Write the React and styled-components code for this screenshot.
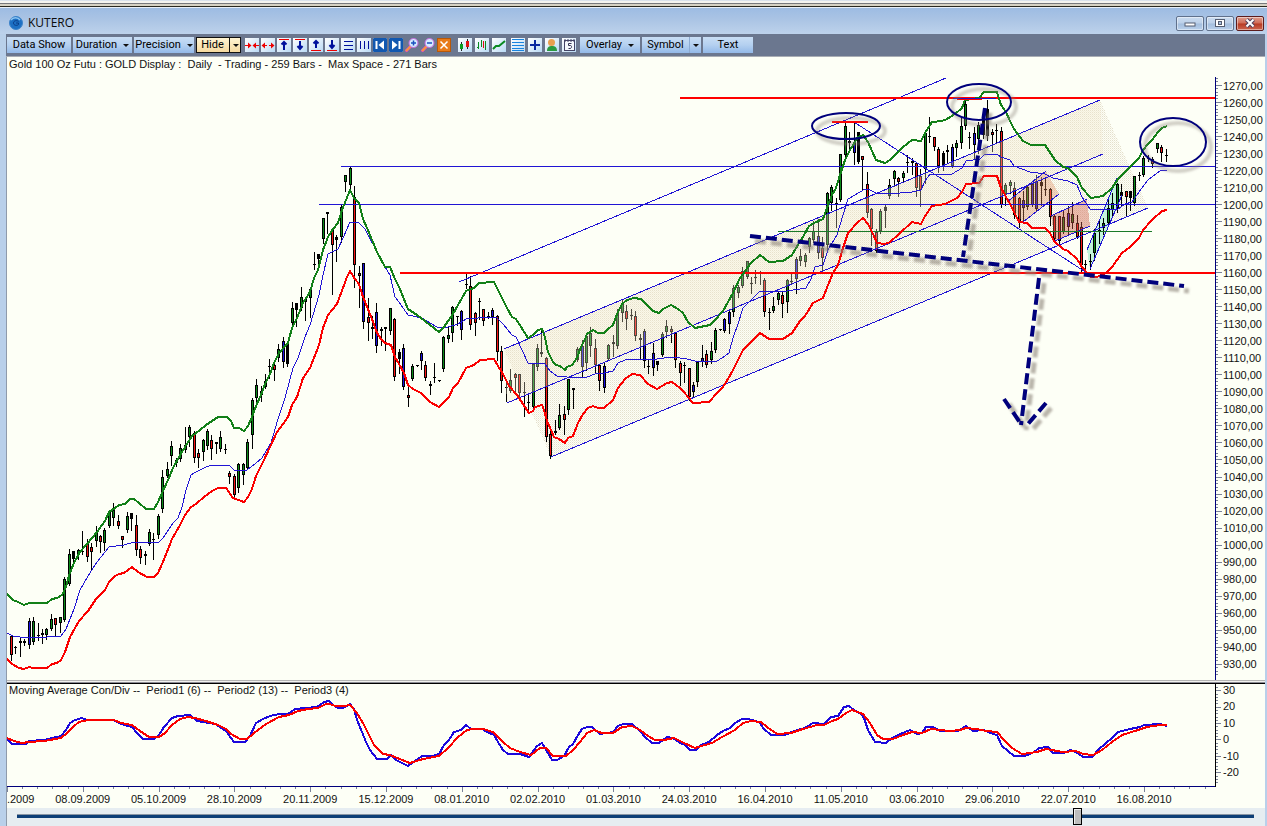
import React, { useState } from 'react';
import styled, { createGlobalStyle, css } from 'styled-components';

const GlobalStyle = createGlobalStyle`
  * {
    box-sizing: border-box;
  }
  body {
    margin: 0;
    background: #bad0ea;
    color: #111;
    font-family: 'Liberation Sans', Arial, sans-serif;
    font-size: 11px;
    line-height: 12px;
  }
`;

const Screen = styled.div`
  display: flex;
  flex-direction: column;
  min-height: 100vh;
`;

const DesktopEdge = styled.div`
  flex: none;
  height: 8px;
  background: linear-gradient(#d9e2ec 0 1px, #f4f4f0 1px 3px, #77797d 3px 4px, #d6d2c4 4px 6px, #28281f 6px 7px, #e6eef7 7px 8px);
`;

const Window = styled.section`
  flex: 1;
  display: flex;
  flex-direction: column;
  padding: 0 2px 0 6px;
  background: #b9d0ea;
`;

const TitleBar = styled.header`
  flex: none;
  display: flex;
  align-items: center;
  height: 26px;
  margin: 0 -2px 0 -6px;
  padding: 4px 3px 0 9px;
  background: linear-gradient(#9dbce3, #a9c3e4 40%, #bdd2eb);
`;

const Title = styled.h1`
  flex: 1;
  margin: 0 0 0 5px;
  font: 12px/16px 'Open Sans', 'Noto Sans', sans-serif;
  color: #0c0c0c;
`;

const WindowButtons = styled.div`
  display: flex;
  gap: 2px;
`;

const WindowButton = styled.button`
  display: flex;
  align-items: center;
  justify-content: center;
  width: 28px;
  height: 15px;
  padding: 0;
  border: 1px solid ${props => props.$danger ? '#5c1c1c' : '#60718c'};
  border-radius: 2px;
  background: ${props => props.$danger
    ? 'linear-gradient(#e0a090, #cf6a55 48%, #b83a22 52%, #cc6650)'
    : 'linear-gradient(#cbdcf0, #bcd0e9 48%, #a3bddd 52%, #bad1ec)'};
  box-shadow: inset 0 0 0 1px rgba(255, 255, 255, 0.45);
`;

const Toolbar = styled.div`
  flex: none;
  display: flex;
  align-items: center;
  height: 23px;
  padding: 0 1px;
  background: #6b778f;
  border-bottom: 1px solid #a9adb4;
`;

const toolFace = css`
  height: 16px;
  border: 0;
  background: linear-gradient(#c9def5, #b4d0f0 50%, #93b9e8);
  color: #000;
  font: 11px/16px Roboto, 'Open Sans', sans-serif;
  white-space: nowrap;
`;

const ToolButton = styled.button`
  ${toolFace}
  display: flex;
  align-items: center;
  justify-content: center;
  gap: 6px;
  flex: none;
  width: ${props => props.$width}px;
  margin-right: 2px;
  padding: 0;
`;

const SplitButton = styled.div`
  ${toolFace}
  display: flex;
  flex: none;
  width: ${props => props.$width}px;
  margin-right: 2px;
  ${props => props.$active && css`
    background: linear-gradient(#fff6d6, #f5d89c);
    outline: 1px solid #111;
    outline-offset: -1px;
    margin-right: 4px;
  `}

  button {
    display: flex;
    align-items: center;
    justify-content: center;
    height: 16px;
    padding: 0;
    border: 0;
    background: none;
    color: inherit;
    font: inherit;
  }
  button:first-child {
    flex: 1;
  }
  button:last-child {
    width: 12px;
    border-left: 1px solid ${props => props.$active ? '#111' : '#8dabd2'};
  }
`;

const Caret = styled.span`
  border: 3px solid transparent;
  border-top-color: #111;
  border-bottom: 0;
`;

const IconGroup = styled.div`
  display: flex;
  flex: none;
  gap: ${props => props.$gap}px;
  margin-right: ${props => props.$after}px;
`;

const IconButton = styled.button`
  width: 14px;
  height: 14px;
  padding: 0;
  border: 0;
  background: ${props => props.$bare ? 'none' : 'linear-gradient(135deg, #fff, #b9d9f4)'};

  svg {
    display: block;
  }
`;

const ChartArea = styled.main`
  flex: 1;
  display: flex;
  flex-direction: column;
  border-left: 1px solid #8f9bab;
  background: #fdfff6;
`;

const Pane = styled.div`
  display: grid;
  grid-template-columns: 1fr 42px;
  grid-template-rows: 100%;
  min-height: 0;
  flex: ${props => props.$fixed ? `0 0 ${props.$fixed}px` : '1 1 0'};
`;

const Plot = styled.svg`
  grid-area: 1 / 1;
  display: block;
  width: 100%;
  height: 100%;
`;

const Caption = styled.h2`
  grid-area: 1 / 1;
  align-self: start;
  margin: 0;
  padding: ${props => props.$offset}px 2px 0;
  font-size: 11px;
  font-weight: normal;
  line-height: 12px;
  white-space: pre;
`;

const PriceLabels = styled.ol`
  grid-area: 1 / 2;
  display: grid;
  grid-auto-rows: 1fr;
  align-items: center;
  margin: 0;
  padding: 20px 0 7px;
  list-style: none;
`;

const IndicatorLabels = styled.ol`
  grid-area: 1 / 2;
  display: flex;
  flex-direction: column;
  justify-content: space-between;
  margin: 0;
  padding: 0 0 9px;
  list-style: none;
`;

const Splitter = styled.div`
  flex: none;
  height: 4px;
  background: linear-gradient(#b4b4b4 0 1px, #f2f2ee 1px 2px, #8c8c94 2px 3px, #000 3px 4px);
`;

const DateAxis = styled.div`
  flex: none;
  overflow: hidden;

  svg {
    display: block;
    width: 100%;
    height: 6px;
  }
`;

const DateLabels = styled.ol`
  display: grid;
  grid-template-columns: repeat(16, 1fr);
  margin: 0 83px 0 -38px;
  padding: 0 0 3px;
  list-style: none;
  text-align: center;
`;

const ScrollRow = styled.label`
  flex: none;
  display: block;
  height: 18px;
  padding: 0 11px 0 10px;
  background: #e6edf1;
`;

const Scroll = styled.input`
  appearance: none;
  display: block;
  width: 100%;
  height: 17px;
  margin: 0;
  background: linear-gradient(transparent 6px, #8a96a4 6px 7px, #0d3f77 7px 10px, transparent 10px);

  &::-webkit-slider-thumb {
    appearance: none;
    width: 9px;
    height: 17px;
    border: 1px solid #000;
    background: #bdbdbd;
    box-shadow: inset 1px 1px 0 #eee;
  }
`;

// high, body top, body bottom, low, colour
const candles = `
635 636 655 660 r|646 647 648 653 k|637 641 643 656 b|639 641 643 645 g|618 621 645 648 b|617 621 642 644 g
623 635 636 640 k|629 633 635 643 r|628 629 635 639 g|614 619 629 630 g|618 618 625 636 r|617 617 623 632 g
577 579 620 621 g|549 554 584 585 g|551 551 559 561 k|549 550 554 559 g|531 551 552 554 k|539 544 557 561 r
543 547 552 570 r|526 533 541 546 g|535 536 542 552 r|528 530 543 550 g|511 512 526 527 g|503 510 518 525 g
515 521 526 528 r|536 536 540 547 r|512 516 530 532 g|513 513 519 530 k|515 525 550 555 r|546 549 558 563 r
551 554 556 564 k|529 532 544 545 g|533 539 540 559 k|514 516 535 538 g|470 477 509 512 g|462 469 476 477 g
441 446 456 465 g|458 460 463 466 r|444 448 459 461 g|427 445 450 452 g|425 427 437 446 g|431 433 458 462 r
449 453 458 467 r|439 440 452 460 g|429 431 446 449 g|435 440 449 459 r|442 442 444 453 k|431 437 449 451 g
444 449 450 453 k|471 473 477 483 r|474 476 495 497 r|463 464 488 492 g|463 464 475 484 g|439 442 468 469 g
398 400 435 448 g|379 385 398 406 g|386 391 395 401 g|374 381 387 388 g|359 366 367 378 k|363 365 370 380 r
344 349 358 361 g|337 341 362 367 b|342 344 364 366 k|302 308 323 327 g|303 303 310 326 k|287 297 308 310 g
298 299 302 320 r|288 289 298 317 g|252 264 265 269 k|254 254 259 264 k|218 218 239 243 g|212 212 214 233 k
228 229 245 294 r|235 237 240 261 k|205 207 237 242 g|175 175 182 191 g|167 168 185 189 g|186 197 265 287 r
266 273 276 307 r|263 263 322 328 b|298 317 323 340 r|316 327 329 338 k|303 312 346 352 b|327 329 331 345 k
327 327 329 350 r|308 308 331 334 g|318 319 377 380 r|349 352 359 373 k|344 348 387 389 b|386 395 398 406 r
364 366 379 380 g|365 365 366 366 k|351 353 361 369 b|361 365 378 380 r|381 384 386 394 r|363 377 378 382 k
380 380 381 381 k|336 337 369 371 g|327 335 339 342 g|306 307 333 341 g|316 316 317 325 k|310 311 330 339 b
273 284 285 288 k|276 286 325 329 r|312 313 323 335 r|298 301 302 319 k|309 309 321 325 r|312 316 317 318 k
308 310 317 324 b|315 316 352 360 r|346 351 381 392 r|379 387 388 401 k|369 380 391 392 g|373 374 378 391 r
374 374 393 398 r|382 392 393 416 k|394 402 403 412 k|363 364 407 408 g|344 348 367 370 g|331 352 354 356 r
357 358 437 441 r|431 434 456 458 r|420 431 433 434 k|404 415 428 429 g|406 414 420 434 r|379 379 410 414 g
388 388 390 408 k|347 349 360 361 g|340 346 367 376 b|333 336 363 370 g|327 333 346 356 g|339 348 365 373 r
364 365 381 390 r|362 366 388 392 b|344 345 359 360 g|335 342 344 356 g|309 313 346 348 g|299 304 313 321 g
305 311 319 329 r|309 315 316 319 k|311 316 336 340 r|334 338 340 358 r|329 331 361 367 b|360 366 367 373 k
343 353 368 375 b|361 361 365 370 k|332 334 355 356 g|320 326 332 337 g|326 329 332 342 r|332 333 360 367 r
361 363 373 385 r|362 365 366 382 k|368 368 397 400 r|382 385 392 397 b|361 362 382 386 g|345 358 362 366 b
350 354 365 367 r|342 351 360 363 g|328 330 350 352 g|329 329 330 330 k|318 319 331 332 b|311 312 324 333 b
285 288 312 316 g|285 287 293 297 g|267 271 286 287 g|261 261 277 278 g|277 283 284 293 k|270 277 278 283 k
271 273 274 284 k|278 280 312 316 r|308 312 313 329 k|297 306 311 312 g|291 293 300 304 g|292 295 304 317 r
279 280 302 312 g|273 281 282 283 k|257 259 279 293 b|249 256 261 265 g|253 255 262 266 g|237 238 247 252 g
221 231 240 242 g|219 236 253 258 b|237 248 258 271 r|192 193 245 251 g|185 187 203 210 g|198 203 204 227 k
154 154 200 201 g|123 126 155 158 g|132 141 143 148 k|123 142 153 164 b|132 132 162 163 k|156 156 160 189 r
172 184 213 217 r|208 209 229 245 r|229 232 251 252 r|209 211 231 233 g|205 207 211 227 k|179 185 196 198 g
170 171 179 186 g|177 178 182 196 r|171 173 178 182 g|155 162 163 172 k|158 161 163 174 r|162 163 188 196 r
169 176 190 206 r|132 133 169 183 g|117 136 137 142 k|137 137 147 150 r|147 149 166 172 r|151 153 166 170 k
145 150 152 162 g|144 147 166 167 b|140 143 148 156 g|118 126 143 148 g|99 104 126 129 g|132 137 138 148 k
127 133 145 158 b|122 125 139 153 g|113 117 135 138 k|100 109 136 140 k|129 132 135 151 r|124 130 131 142 k
127 131 205 207 r|183 185 194 205 g|180 182 186 193 g|182 188 215 218 r|197 198 222 227 r|191 200 208 222 b
185 187 207 209 g|183 184 205 206 b|175 181 209 210 b|177 182 186 205 k|178 189 190 195 k|188 189 217 225 r
215 216 239 240 r|216 216 241 243 r|210 217 232 233 g|206 213 227 235 b|202 214 223 228 g|215 223 237 238 r
222 227 265 271 r|260 264 265 272 k|254 261 262 269 k|229 233 253 260 g|221 230 231 243 k|218 223 228 234 g
200 208 223 225 g|193 203 210 216 g|183 184 208 212 g|184 192 196 205 k|191 191 197 216 r|191 191 198 210 k
176 176 203 205 g|172 175 176 180 k|156 158 175 176 g|155 158 159 161 k|157 159 164 167 r|143 143 149 152 g
145 147 153 161 r|149 155 156 161 k
`.trim().split(/[|\n]/).map(row => {
  const [high, top, bottom, low, tone] = row.split(' ');
  return { high: +high, top: +top, bottom: +bottom, low: +low, tone };
});

const tones = { r: '#f81414', g: '#0a8a18', b: '#1a10e0', k: '#000' };

const upperBand = '7,594 13,600 18,602 24,605 29,603 47,603 52,599 57,598 62,595 66,587 69,575 74,563 80,552 87,544 92,538 97,532 105,521 109,512 115,508 119,505 125,504 130,499 134,499 139,503 146,509 154,509 158,502 163,491 168,480 173,468 179,457 185,447 192,436 200,430 206,425 212,421 218,417 227,417 231,421 234,428 239,428 244,431 248,426 252,417 256,406 261,395 265,384 270,374 274,363 279,353 288,343 292,328 297,318 303,303 310,292 314,278 318,270 323,250 328,237 333,229 338,223 342,210 350,190 354,198 359,203 363,219 367,228 377,252 385,267 390,267 395,279 399,287 408,309 417,315 421,318 430,325 439,332 444,327 448,321 453,314 458,305 462,298 466,291 474,288 479,283 494,282 497,288 503,300 507,308 512,317 516,319 528,338 533,335 538,330 542,329 545,337 548,352 553,362 556,365 560,366 565,370 567,367 572,365 577,358 581,347 585,339 587,334 593,330 598,333 604,333 608,329 613,325 617,314 622,304 627,300 634,298 641,299 647,305 653,311 659,313 663,309 667,307 671,305 678,309 683,313 688,322 695,328 710,325 716,319 723,311 733,293 740,278 751,263 760,255 769,262 783,261 792,255 799,243 803,237 809,226 814,223 823,219 828,205 832,195 836,188 840,175 845,160 850,150 858,137 863,135 868,142 876,160 885,163 890,160 899,151 903,147 912,140 921,141 925,133 932,122 942,121 947,119 955,114 962,108 965,100 979,98 984,92 997,92 1001,105 1006,112 1010,121 1014,129 1023,141 1031,145 1045,145 1049,151 1055,160 1063,167 1068,168 1077,177 1082,188 1091,198 1103,196 1112,188 1118,179 1130,167 1139,158 1143,150 1148,144 1152,140 1158,132 1162,128 1167,126';

const lowerBand = '7,659 12,664 19,668 24,669 29,667 33,668 47,668 52,664 57,663 61,660 65,652 70,637 79,621 88,611 96,599 105,590 109,582 115,576 119,574 124,573 132,567 138,572 147,577 154,577 158,573 163,562 172,539 180,525 185,515 191,507 196,504 204,497 212,491 218,488 226,488 233,498 244,502 248,497 252,489 256,476 263,462 270,447 277,432 283,424 288,417 292,405 297,397 303,378 310,368 319,345 323,328 328,315 337,304 343,288 347,277 350,271 355,279 359,284 363,297 372,319 377,333 381,339 385,343 391,345 395,357 399,364 404,373 408,385 413,389 421,393 430,402 439,407 444,402 449,397 453,388 458,383 466,368 474,365 480,360 494,359 498,366 503,374 509,386 517,395 529,413 533,411 535,407 542,405 544,410 547,421 551,430 554,437 559,439 565,443 568,438 573,436 578,423 583,414 588,408 593,406 598,408 604,408 613,400 618,388 625,379 632,374 640,375 648,384 657,389 667,383 672,382 680,388 684,392 688,397 693,403 709,402 717,393 723,387 728,379 733,370 743,350 753,340 760,333 769,339 783,339 792,333 800,321 805,316 813,303 823,298 828,285 833,273 838,265 843,248 848,233 858,222 863,218 868,224 873,234 877,243 885,244 890,242 899,234 912,222 921,224 925,216 932,206 945,204 957,198 962,192 966,184 979,183 984,176 997,176 1001,188 1010,204 1019,222 1027,223 1032,228 1045,228 1050,233 1054,241 1063,249 1068,251 1077,259 1082,267 1091,277 1097,277 1106,273 1112,267 1122,253 1130,247 1139,238 1143,230 1152,220 1162,211 1167,210';

const middleBand = '7,633 13,636 20,637 47,637 61,636 66,629 74,609 80,590 88,576 97,562 109,547 124,545 134,542 159,542 163,538 173,523 178,518 182,507 186,490 191,475 196,472 206,467 212,465 229,465 234,470 247,470 256,463 262,458 271,443 278,419 285,398 293,368 298,358 305,337 310,325 319,295 323,275 328,254 338,249 343,238 350,222 359,223 365,229 377,252 385,267 390,275 395,297 399,302 408,315 422,318 430,323 437,327 448,327 458,324 466,319 478,318 496,317 503,324 512,335 516,337 528,363 545,364 550,371 557,376 567,377 587,377 595,374 604,373 613,371 618,363 625,360 657,359 672,357 687,359 695,361 717,361 722,358 729,353 733,338 738,324 743,308 750,301 760,291 787,291 806,288 811,279 815,267 823,265 828,250 837,235 843,215 848,199 860,192 865,189 870,190 876,193 900,193 912,192 921,190 925,181 930,174 952,174 962,168 966,161 973,160 980,159 984,155 997,154 1001,157 1010,160 1014,166 1030,172 1045,174 1053,178 1068,181 1077,185 1082,197 1090,209 1094,210 1118,209 1125,204 1132,202 1139,192 1148,180 1160,171 1167,170';

const macdLine = '7,739 12,744 26,744 29,741 44,740 52,738 61,736 66,730 70,723 75,720 82,718 87,720 113,720 121,724 132,727 137,733 143,739 154,739 159,735 164,727 172,718 178,716 190,715 197,721 215,724 226,731 234,742 245,742 250,736 256,723 263,719 270,716 279,714 288,714 295,709 305,708 317,707 324,702 329,701 333,705 338,708 343,708 350,704 354,709 357,720 362,732 366,742 370,750 377,759 387,759 391,755 396,760 402,763 408,766 422,756 432,756 439,754 444,745 449,740 454,732 461,730 466,725 471,729 482,729 487,732 494,735 498,742 503,750 508,754 520,754 529,757 537,746 542,743 545,748 552,760 557,760 564,756 569,747 573,744 578,735 582,729 587,727 592,727 600,734 613,732 618,726 623,724 632,724 639,730 645,737 652,743 659,743 667,737 673,738 680,743 685,745 690,750 696,750 701,745 709,742 717,735 723,731 730,728 735,723 742,719 748,719 759,722 764,729 771,735 785,735 794,731 805,728 813,723 824,724 831,717 838,716 844,707 849,706 854,710 861,714 864,718 868,730 875,742 886,743 892,738 898,735 905,732 910,730 917,734 922,733 926,727 933,727 940,731 958,731 966,726 973,731 984,730 990,733 997,735 1002,746 1008,751 1014,756 1025,756 1034,752 1039,748 1048,747 1053,753 1064,753 1070,750 1076,752 1083,757 1092,757 1098,750 1106,743 1112,738 1118,732 1130,729 1140,727 1144,725 1160,724 1167,726';

const signalLine = '7,738 14,741 22,743 29,742 44,741 61,738 67,733 74,726 79,722 88,720 114,720 121,723 132,725 140,731 149,737 159,737 165,733 172,725 180,719 188,717 195,718 206,721 218,725 226,729 231,734 240,739 247,739 253,734 258,730 266,724 279,717 289,715 298,711 308,709 318,708 326,704 330,704 335,706 344,706 350,705 357,713 364,725 374,745 383,754 390,755 402,760 410,763 423,759 439,756 448,748 458,737 467,730 473,729 483,729 493,732 503,742 510,748 520,752 531,755 540,748 546,748 553,756 566,756 573,750 580,742 587,733 594,730 602,733 613,733 622,727 632,726 640,730 648,736 655,740 664,740 674,738 684,743 695,748 705,745 712,743 722,737 735,730 743,723 751,721 761,722 767,727 777,734 791,733 803,729 817,725 824,725 832,721 838,719 846,713 852,710 863,714 870,723 877,735 883,739 893,739 903,735 912,732 922,733 931,729 950,731 960,730 966,728 976,729 987,731 997,732 1004,740 1012,748 1022,754 1037,752 1046,749 1063,752 1076,751 1083,754 1093,755 1102,750 1112,742 1122,735 1135,731 1147,727 1160,725 1167,725';

const prices = Array.from({ length: 35 }, (_, i) => `${1270 - i * 10},00`);

const dates = [
  '14.08.2009', '08.09.2009', '05.10.2009', '28.10.2009', '20.11.2009', '15.12.2009', '08.01.2010', '02.02.2010',
  '01.03.2010', '24.03.2010', '16.04.2010', '11.05.2010', '03.06.2010', '29.06.2010', '22.07.2010', '16.08.2010',
];

const trendLines = [
  [459, 282, 946, 78],
  [504, 349, 1100, 100],
  [507, 403, 1103, 154],
  [551, 457, 1148, 208],
  [854, 122, 1087, 273],
  [1007, 202, 1046, 171],
  [1023, 222, 1059, 194],
  [1051, 216, 1087, 199],
  [1055, 241, 1090, 226],
  [1087, 250, 1117, 178],
  [1090, 269, 1122, 195],
];

const Candle = ({ index, data }) => {
  const x = Math.round(10.8 + index * 4.459);
  const { high, top, bottom, low, tone } = data;
  return (
    <g>
      <rect x={x} y={high} width="1" height={low - high + 1} />
      <rect x={x - 1} y={top} width="3" height={Math.max(1, bottom - top)} />
      {bottom - top > 2 && (
        <rect x={x} y={top + 1} width="1" height={bottom - top - 2} fill={tones[tone]} />
      )}
    </g>
  );
};

const Ellipses = () => (
  <>
    <ellipse cx="846" cy="126" rx="34" ry="13" />
    <ellipse cx="979" cy="102" rx="32" ry="18" />
    <ellipse cx="1173" cy="142" rx="33" ry="24" />
  </>
);

const Dashes = () => (
  <>
    <path d="M750 236 L1184 286" />
    <path d="M985 108 L963 257" />
    <path d="M1039 278 L1021 425" />
    <path d="M1004 399 L1021 424" />
    <path d="M1046 403 L1028 424" />
  </>
);

const PricePlot = () => (
  <Plot viewBox="7 57 1216 623" preserveAspectRatio="none" role="img" aria-label="Gold daily price chart">
    <defs>
      <pattern id="grain" width="2" height="2" patternUnits="userSpaceOnUse">
        <rect width="1" height="1" fill="#e4dfcc" />
        <rect x="1" y="1" width="1" height="1" fill="#f3f0e2" />
      </pattern>
      <filter id="soft" x="-10%" y="-10%" width="120%" height="120%">
        <feGaussianBlur stdDeviation="1.2" />
      </filter>
    </defs>
    <g shapeRendering="crispEdges" fill="none">
      <polygon points="504,349 1100,100 1148,208 551,457" fill="url(#grain)" />
      <polygon points="1087,250 1117,178 1122,195 1090,269" fill="#c4f5dc" />
      <g fill="#000">
        {candles.map((data, i) => <Candle key={i} index={i} data={data} />)}
      </g>
      <polygon points="504,349 1100,100 1103,154 507,403" fill="#ecd8a0" fillOpacity="0.12" />
      <polygon points="504,349 1100,100 1103,154 507,403" fill="#f6f1e2" fillOpacity="0.22" />
      <polygon points="1007,202 1046,171 1059,194 1023,222" fill="#e08858" fillOpacity="0.35" />
      <polygon points="1051,216 1087,199 1090,226 1055,241" fill="#d05a48" fillOpacity="0.4" />
      <g stroke="#2014d4">
        <path d="M341 166.5H1215M319 204.5H1215" />
        {trendLines.map(([x1, y1, x2, y2]) => (
          <line key={`${x1}-${y1}`} x1={x1} y1={y1} x2={x2} y2={y2} />
        ))}
        <polyline points={middleBand} />
      </g>
      <path d="M778 231.5H1152" stroke="#1a7a28" />
      <path d="M680 98H1215M400 273H1215M832 122H868" stroke="#f00" strokeWidth="2" />
      <polyline points={upperBand} stroke="#128018" strokeWidth="2" />
      <polyline points={lowerBand} stroke="#fa0000" strokeWidth="2" />
      <path d="M953 98.5H996" stroke="#1c12c8" />
      <path d="M957 99.5H982" stroke="#f00" />
    </g>
    <g fill="none" stroke="#8c8478" filter="url(#soft)" transform="translate(5 5)">
      <g strokeWidth="4" strokeOpacity="0.38"><Ellipses /></g>
      <g strokeWidth="5" strokeOpacity="0.6" strokeDasharray="11 5"><Dashes /></g>
    </g>
    <g fill="none" stroke="#00007c">
      <g strokeWidth="2"><Ellipses /></g>
      <g strokeWidth="4" strokeDasharray="11 5"><Dashes /></g>
    </g>
    <g shapeRendering="crispEdges">
      <rect x="1215" y="77" width="1" height="603" fill="#00007c" />
      {Array.from({ length: 176 }, (_, i) => (
        <rect
          key={i}
          x="1216"
          y={Math.round(78 + i * 3.406)}
          width={i % 5 === 2 ? 6 : 2}
          height="1"
          fill="#7a8298"
        />
      ))}
    </g>
  </Plot>
);

const IndicatorPlot = () => (
  <Plot viewBox="7 684 1216 103" preserveAspectRatio="none" role="img" aria-label="Moving average convergence divergence">
    <g shapeRendering="crispEdges" fill="none" strokeWidth="2">
      <polyline points={macdLine} stroke="#1c08dc" />
      <polyline points={signalLine} stroke="#fa0000" />
      <rect x="1215" y="684" width="1" height="103" fill="#000" />
      <rect x="7" y="786" width="1208" height="1" fill="#00007c" />
      {Array.from({ length: 30 }, (_, i) => (
        <rect
          key={i}
          x="1216"
          y={Math.round(687 + i * 3.28)}
          width={i % 5 === 1 ? 5 : 2}
          height="1"
          fill="#7a8298"
        />
      ))}
    </g>
  </Plot>
);

const DateTicks = () => (
  <svg viewBox="7 787 1258 6" preserveAspectRatio="none" shapeRendering="crispEdges" aria-hidden="true">
    {Array.from({ length: 80 }, (_, i) => (
      <rect key={i} x={Math.round(7 + i * 15.16)} y="787" width="1" height={i % 5 === 0 ? 5 : 2} fill="#7a8298" />
    ))}
  </svg>
);

const navigationIcons = [
  ['Compress', <><path d="M0 7.5h4M14 7.5h-4" stroke="#e00" /><path d="M3 4.5l3.5 3-3.5 3zM11 4.5l-3.500 3 3.500 3z" fill="#e00" /></>],
  ['Expand', <><path d="M3 7.500h3M11 7.500H8" stroke="#e00" /><path d="M4 4.500L0.500 7.500l3.500 3zM10 4.500l3.500 3-3.500 3z" fill="#e00" /></>],
  ['Stretch up', <><path d="M2 1.5h10" stroke="#e00" /><path d="M7 4v8M4.500 6.500L7 4l2.500 2.500" stroke="#00109c" strokeWidth="2" /></>],
  ['Shrink down', <><path d="M2 1.500h10" stroke="#e00" /><path d="M7 3v7M4.500 8L7 11l2.500-3" stroke="#00109c" strokeWidth="2" /></>],
  ['Raise', <><path d="M2 12.500h10" stroke="#e00" /><path d="M7 3v7M4.500 5.500L7 3l2.500 2.500" stroke="#00109c" strokeWidth="2" /></>],
  ['Lower', <><path d="M2 12.500h10" stroke="#e00" /><path d="M7 2v7M4.500 7L7 10l2.500-3" stroke="#00109c" strokeWidth="2" /></>],
  ['Rows', <path d="M3 3.500h9M3 7.500h9M3 11.500h9" stroke="#00109c" />],
  ['Columns', <path d="M3.500 3v8M7.500 3v8M11.500 3v8" stroke="#00109c" />],
  ['First', <><rect width="14" height="14" rx="1" fill="#1258b0" /><path d="M3.500 3v8" stroke="#fff" strokeWidth="2" /><path d="M11 2.500v9L5.500 7z" fill="#fff" /></>],
  ['Last', <><rect width="14" height="14" rx="1" fill="#1258b0" /><path d="M10.500 3v8" stroke="#fff" strokeWidth="2" /><path d="M3 2.500v9L8.500 7z" fill="#fff" /></>],
  ['Zoom in', <><path d="M0.500 13.500l5-5" stroke="#e040d8" strokeWidth="3" /><path d="M1 13l5-5" stroke="#f89838" strokeWidth="2" /><circle cx="8.500" cy="5" r="4.500" fill="#d4ecff" stroke="#c868e0" /><path d="M8.500 2.500v5M6 5h5" stroke="#1a50c0" strokeWidth="1.500" /></>, true],
  ['Zoom out', <><path d="M0.500 13.500l5-5" stroke="#e040d8" strokeWidth="3" /><path d="M1 13l5-5" stroke="#f89838" strokeWidth="2" /><circle cx="8.500" cy="5" r="4.500" fill="#d4ecff" stroke="#c868e0" /><path d="M6 5h5" stroke="#1a50c0" strokeWidth="1.500" /></>, true],
  ['Clear', <><rect width="14" height="14" rx="1" fill="#e87a18" /><rect x="0.500" y="0.500" width="13" height="13" stroke="#b85808" /><path d="M3.500 3.500l7 7M10.500 3.500l-7 7" stroke="#fff" strokeWidth="1.500" /></>],
];

const styleIcons = [
  ['Candles', <><path d="M3.500 4v9M9.500 1v10" stroke="#222" /><rect x="2" y="6" width="3" height="5" fill="#0a9a20" /><rect x="8" y="3" width="3" height="6" fill="#e01010" /></>],
  ['Bars', <><path d="M3.500 4v7M2 9.500h1M6.500 2v7M10.500 3v9" stroke="#0a8a20" /><path d="M8.500 3v7" stroke="#e01010" /></>],
  ['Line', <path d="M1 11l3-3h3l6-5" stroke="#0a8a20" strokeWidth="2" />],
];

const extraIcons = [
  ['Grid', <path d="M1 1.500h12M1 4.500h12M1 7.500h12M1 10.500h12M1 12.500h12" stroke="#1884e0" />],
  ['Crosshair', <path d="M7 2v10M2 7h10" stroke="#0a28a0" strokeWidth="2" />],
  ['Profile', <><path d="M2 13c0-4 2-5 5-5s5 1 5 5z" fill="#2a9a40" /><circle cx="6.500" cy="4.500" r="3.500" fill="#e8a050" /></>],
  ['Calendar', <><rect x="2.500" y="2.500" width="10" height="10" fill="#f4f8fc" stroke="#446" /><path d="M3 1v3M6 1v3M9 1v3M12 1v3" stroke="#446" /><path d="M9.500 5.500h-3v2h2c1.500 0 1.500 3-0.500 3h-1.500" stroke="#335" /></>],
];

const Icons = ({ items, gap, after }) => (
  <IconGroup $gap={gap} $after={after}>
    {items.map(([label, drawing, bare]) => (
      <IconButton key={label} type="button" aria-label={label} title={label} $bare={bare}>
        <svg width="14" height="14" viewBox="0 0 14 14" fill="none">{drawing}</svg>
      </IconButton>
    ))}
  </IconGroup>
);

const App = () => {
  const [position, setPosition] = useState(860);

  return (
    <Screen>
      <GlobalStyle />
      <DesktopEdge />
      <Window>
        <TitleBar>
          <svg width="14" height="14" viewBox="0 0 14 14" fill="none" aria-hidden="true">
            <circle cx="7" cy="7" r="6.500" fill="#1d70c4" stroke="#3c83c9" />
            <path d="M2 4c2-3 7-3 9 0" stroke="#8cc4f0" strokeWidth="1.500" />
            <path d="M9.500 5.500C8 4 4.500 4.500 4.500 7s3.500 3 5 1.500V7H7" stroke="#0a3c86" />
          </svg>
          <Title>KUTERO</Title>
          <WindowButtons>
            <WindowButton type="button" aria-label="Minimize">
              <svg width="12" height="10" viewBox="0 0 12 10">
                <rect x="1" y="5" width="10" height="3" fill="#fff" stroke="#555d70" />
              </svg>
            </WindowButton>
            <WindowButton type="button" aria-label="Maximize">
              <svg width="12" height="10" viewBox="0 0 12 10">
                <rect x="1.500" y="1.500" width="9" height="7" fill="#fff" stroke="#555d70" />
                <rect x="4.500" y="3.500" width="3" height="3" fill="#a9c0de" stroke="#555d70" />
              </svg>
            </WindowButton>
            <WindowButton type="button" aria-label="Close" $danger>
              <svg width="12" height="10" viewBox="0 0 12 10" fill="none">
                <path d="M2.500 1.500l7 7M9.500 1.500l-7 7" stroke="#50405c" strokeWidth="4" />
                <path d="M2.500 1.500l7 7M9.500 1.500l-7 7" stroke="#fff" strokeWidth="2" />
              </svg>
            </WindowButton>
          </WindowButtons>
        </TitleBar>

        <Toolbar role="toolbar">
          <ToolButton type="button" $width={64}>Data Show</ToolButton>
          <ToolButton type="button" $width={59}>Duration <Caret /></ToolButton>
          <ToolButton type="button" $width={60}>Precision <Caret /></ToolButton>
          <SplitButton $width={45} $active>
            <button type="button">Hide</button>
            <button type="button" aria-label="Hide options"><Caret /></button>
          </SplitButton>
          <Icons items={navigationIcons} gap={2} after={7} />
          <Icons items={styleIcons} gap={3} after={5} />
          <Icons items={extraIcons} gap={3} after={4} />
          <ToolButton type="button" $width={60}>Overlay <Caret /></ToolButton>
          <SplitButton $width={59}>
            <button type="button">Symbol</button>
            <button type="button" aria-label="Symbol options"><Caret /></button>
          </SplitButton>
          <ToolButton type="button" $width={50}>Text</ToolButton>
        </Toolbar>

        <ChartArea>
          <Pane>
            <PricePlot />
            <Caption $offset={1}>{'Gold 100 Oz Futu : GOLD Display :  Daily  - Trading - 259 Bars -  Max Space - 271 Bars'}</Caption>
            <PriceLabels>
              {prices.map(price => <li key={price}>{price}</li>)}
            </PriceLabels>
          </Pane>
          <Splitter />
          <Pane $fixed={103}>
            <IndicatorPlot />
            <Caption $offset={0}>{'Moving Average Con/Div --  Period1 (6) --  Period2 (13) --  Period3 (4)'}</Caption>
            <IndicatorLabels>
              {[30, 20, 10, 0, -10, -20].map(level => <li key={level}>{level}</li>)}
            </IndicatorLabels>
          </Pane>
          <DateAxis>
            <DateTicks />
            <DateLabels>
              {dates.map(date => <li key={date}>{date}</li>)}
            </DateLabels>
          </DateAxis>
          <ScrollRow>
            <Scroll
              type="range"
              min="0"
              max="1000"
              value={position}
              aria-label="Chart position"
              onChange={e => setPosition(Number(e.target.value))}
            />
          </ScrollRow>
        </ChartArea>
      </Window>
    </Screen>
  );
};

export default App;
